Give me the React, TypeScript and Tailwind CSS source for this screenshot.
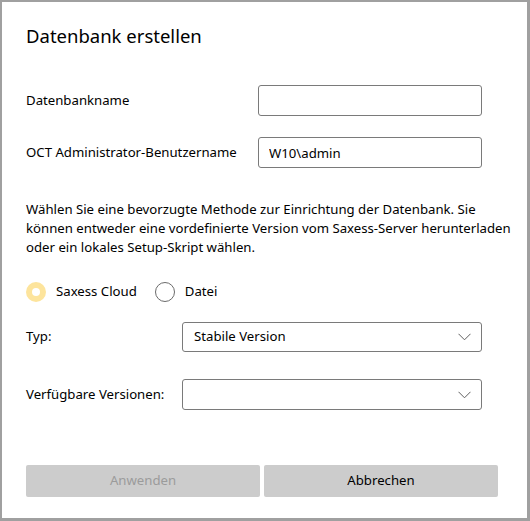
import { useState } from 'react';

const font = { fontFamily: '"Noto Sans", "Open Sans", Arial, sans-serif' };

function Chevron() {
    return (
        <svg width="13" height="8" viewBox="0 0 13 8" fill="none" className="shrink-0">
            <path d="M0.5 0.8 L6.5 6.8 L12.5 0.8" stroke="#5f5f5f" strokeWidth="1" />
        </svg>
    );
}

function Radio({ checked, label, onClick }: { checked: boolean; label: string; onClick: () => void }) {
    return (
        <button onClick={onClick} className="flex items-center gap-[10px] text-[13.2px] text-black">
            {checked ? (
                <span className="w-[20px] h-[20px] rounded-full bg-[#fde49c] flex items-center justify-center">
                    <span className="w-[8px] h-[8px] rounded-full bg-white" />
                </span>
            ) : (
                <span className="w-[20px] h-[20px] rounded-full border border-[#6b6b6b] bg-white" />
            )}
            <span>{label}</span>
        </button>
    );
}

export default function App() {
    const [source, setSource] = useState<'cloud' | 'file'>('cloud');
    const [name, setName] = useState('');
    const [admin, setAdmin] = useState('W10\\admin');

    return (
        <div
            style={font}
            className="w-[530px] h-[521px] bg-white border-[#a0a0a0] border-t-2 border-l-2 border-r-[3px] border-b-[3px] pl-[24px] pr-[22px] flex flex-col text-black"
        >
            <h1 className="mt-[21px] text-[18.5px] leading-[26px] font-normal">Datenbank erstellen</h1>

            {/* Eingaben */}
            <div className="mt-[36px] grid grid-cols-[232px_224px] items-center gap-y-[21px] text-[13.2px]">
                <label>Datenbankname</label>
                <input
                    value={name}
                    onChange={e => setName(e.target.value)}
                    className="h-[31px] border border-[#7a7a7a] rounded-[3px] px-[10px] outline-none"
                />
                <label>OCT Administrator-Benutzername</label>
                <input
                    value={admin}
                    onChange={e => setAdmin(e.target.value)}
                    className="h-[31px] border border-[#7a7a7a] rounded-[3px] px-[10px] outline-none"
                />
            </div>

            <p className="mt-[32px] text-[13.2px] leading-[19px] whitespace-nowrap">
                Wählen Sie eine bevorzugte Methode zur Einrichtung der Datenbank. Sie<br />
                können entweder eine vordefinierte Version vom Saxess-Server herunterladen<br />
                oder ein lokales Setup-Skript wählen.
            </p>

            <div className="mt-[25px] flex items-center gap-[18px]">
                <Radio checked={source === 'cloud'} label="Saxess Cloud" onClick={() => setSource('cloud')} />
                <Radio checked={source === 'file'} label="Datei" onClick={() => setSource('file')} />
            </div>

            <div className="mt-[20px] grid grid-cols-[156px_300px] items-center gap-y-[27px] text-[13.2px]">
                <span>Typ:</span>
                <div className="h-[30px] border border-[#7a7a7a] rounded-[3px] pl-[11px] pr-[10px] flex items-center justify-between">
                    <span>Stabile Version</span>
                    <Chevron />
                </div>
                <span>Verfügbare Versionen:</span>
                <div className="h-[31px] border border-[#7a7a7a] rounded-[3px] pl-[11px] pr-[10px] flex items-center justify-end">
                    <Chevron />
                </div>
            </div>

            <div className="mt-[55px] flex gap-[4px] text-[13.2px]">
                <button disabled className="w-[234px] h-[32px] rounded-[2px] bg-[#cccccc] text-[#9b9b9b]">
                    Anwenden
                </button>
                <button className="w-[234px] h-[32px] rounded-[2px] bg-[#cccccc] text-black">
                    Abbrechen
                </button>
            </div>
        </div>
    );
}
